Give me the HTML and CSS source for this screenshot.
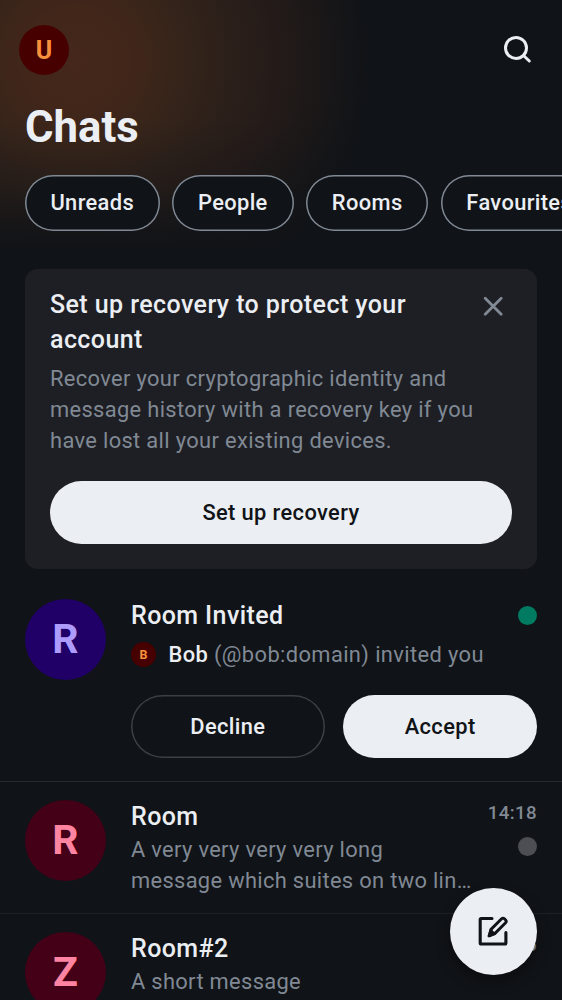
FILE: index.html
```html
<!DOCTYPE html>
<html lang="en">
<head>
<meta charset="utf-8">
<title>Chats</title>
<link rel="stylesheet" href="styles.css">
</head>
<body>
<div class="screen">
  <header class="header">
    <div class="topbar">
      <div class="avatar avatar-user">U</div>
      <svg class="search" viewBox="0 0 32 32" fill="none" stroke="currentColor" stroke-width="3" stroke-linecap="round"><circle cx="14" cy="13.9" r="10.5"/><path d="M22 22 27.3 27"/></svg>
    </div>
    <h1 class="title">Chats</h1>
    <nav class="filters">
      <button class="chip chip-unreads">Unreads</button>
      <button class="chip chip-people">People</button>
      <button class="chip chip-rooms">Rooms</button>
      <button class="chip chip-favourites">Favourites</button>
    </nav>
  </header>

  <section class="banner">
    <div class="banner-head">
      <h2 class="banner-title">Set up recovery to protect your account</h2>
      <svg class="close" viewBox="0 0 24 24" fill="none" stroke="currentColor" stroke-width="2.8" stroke-linecap="round"><path d="M4.2 4.2 20.2 20.2M20.2 4.2 4.2 20.2"/></svg>
    </div>
    <p class="banner-text">Recover your cryptographic identity and message history with a recovery key if you have lost all your existing devices.</p>
    <button class="button button-primary">Set up recovery</button>
  </section>

  <main class="rooms">
    <article class="room room-invite">
      <div class="avatar avatar-room purple">R</div>
      <div class="room-body">
        <div class="room-line">
          <h3 class="room-name">Room Invited</h3>
          <span class="dot green"></span>
        </div>
        <div class="inviter">
          <span class="avatar avatar-inviter">B</span>
          <span class="inviter-text"><b>Bob</b> (@bob:domain) invited you</span>
        </div>
        <div class="actions">
          <button class="button button-outline">Decline</button>
          <button class="button button-primary">Accept</button>
        </div>
      </div>
    </article>
    <article class="room">
      <div class="avatar avatar-room pink">R</div>
      <div class="room-body">
        <div class="room-line">
          <h3 class="room-name">Room</h3>
          <time class="time">14:18</time>
        </div>
        <div class="room-line">
          <p class="message">A very very very very long message which suites on two lin…</p>
          <span class="dot gray"></span>
        </div>
      </div>
    </article>
    <article class="room">
      <div class="avatar avatar-room pink">Z</div>
      <div class="room-body">
        <div class="room-line">
          <h3 class="room-name">Room#2</h3>
          <time class="time">14:16</time>
        </div>
        <div class="room-line"><p class="message">A short message</p></div>
      </div>
    </article>
  </main>

  <button class="fab" aria-label="New chat">
    <svg class="compose" viewBox="0 0 36 36" fill="none" stroke="currentColor" stroke-width="3.1" stroke-linecap="round" stroke-linejoin="round">
      <path d="M17 5.5H6.2Q5.2 5.5 5.2 6.5V30Q5.2 31 6.2 31H29.9Q30.9 31 30.9 30V19.5"/>
      <path stroke-width="2.9" d="M14.2 22.8 16 16.4 26.6 5.8Q28 4.4 29.4 5.8L30.6 7Q31.9 8.4 30.6 9.8L20 20.4Z"/>
      <path fill="currentColor" stroke-width="2" d="M13.6 23.2 15.6 16.7 20 21.1Z"/>
    </svg>
  </button>
</div>
</body>
</html>
```
FILE: styles.css
```css
* { box-sizing: border-box; margin: 0; padding: 0; }

body {
  background: #101317;
  color: #ebeef2;
  font-family: Roboto, "Liberation Sans", sans-serif;
  overflow: hidden;
}

button { font: inherit; color: inherit; border: 0; background: none; }
svg { display: block; flex: none; }

.screen {
  position: relative;
  width: 562px;
  height: 1000px;
  overflow: hidden;
}

.header {
  height: 269px;
  padding-top: 25px;
  background:
    linear-gradient(to bottom, rgba(16,19,23,0) 120px, rgba(16,19,23,.3) 185px, #101317 250px),
    radial-gradient(circle at 75px 60px, #45271b 0, #42261a 50px, #38251a 95px, #2e211a 140px, #261c19 190px, #1c1818 240px, #101317 292px);
}

.topbar {
  display: flex;
  justify-content: space-between;
  align-items: center;
  padding: 0 28px 0 19px;
}

.avatar {
  display: flex;
  flex: none;
  align-items: center;
  justify-content: center;
  border-radius: 50%;
  font-weight: 700;
}
.avatar-user { width: 50px; height: 50px; background: #470000; color: #f8913d; font-size: 25px; }
.avatar-room { width: 81px; height: 81px; padding-bottom: 1px; font-size: 41px; }
.avatar-inviter { width: 25px; height: 25px; background: #470000; color: #f8913d; font-size: 12.5px; }
.purple { background: #200066; color: #ad9cfe; }
.pink { background: #430017; color: #ff84a2; }

.search { width: 32px; height: 32px; }

.title {
  padding: 25px 25px 0;
  font-size: 43.7px;
  line-height: 54px;
  font-weight: 700;
}

.filters {
  display: flex;
  gap: 12.5px;
  padding: 21px 0 0 25px;
}
.chip {
  flex: none;
  height: 56px;
  padding-bottom: 1px;
  border-radius: 28px;
  background: #101317;
  box-shadow: inset 0 0 0 1.5px #808994;
  font-size: 21.86px;
  font-weight: 500;
  letter-spacing: .36px;
}
.chip-unreads { width: 134.5px; }
.chip-people { width: 121.7px; }
.chip-rooms { width: 122px; }
.chip-favourites { width: 157px; }

.banner {
  height: 300px;
  margin: 0 25px;
  padding: 19px 25px 25px;
  border-radius: 12.5px;
  background: #1e1f24;
}
.banner-head { display: flex; justify-content: space-between; }
.banner-title {
  width: 400px;
  font-size: 25px;
  line-height: 34.5px;
  font-weight: 500;
  letter-spacing: .42px;
}
.close { width: 24px; height: 24px; margin: 6px 7px 0 0; color: #808994; }
.banner-text {
  margin: 5.6px 0 25px;
  color: #808994;
  font-size: 21.86px;
  line-height: 31.2px;
  letter-spacing: .35px;
}

.button {
  width: 100%;
  height: 63px;
  border-radius: 32px;
  font-size: 21.86px;
  font-weight: 500;
  letter-spacing: .38px;
}
.button-primary { background: #ebeef2; color: #101317; }
.button-outline { box-shadow: inset 0 0 0 1.5px #3c3f44; }

.room {
  display: flex;
  gap: 25px;
  height: 132px;
  padding: 18px 25px 0;
  border-bottom: 1px solid #1e2126;
}
.room-invite { height: 213px; padding-top: 29.5px; border-color: #26282d; }
.room-body { flex: 1; min-width: 0; }
.room-line { display: flex; justify-content: space-between; }
.room-name {
  font-size: 25px;
  line-height: 34px;
  font-weight: 500;
  letter-spacing: .4px;
}
.dot { flex: none; width: 19px; height: 19px; border-radius: 50%; }
.green { margin-top: 7px; background: #007a61; }
.gray { margin-top: 3px; background: #4c4e54; }

.inviter { display: flex; align-items: center; gap: 12.5px; margin-top: 6px; }
.inviter-text {
  color: #808994;
  font-size: 21.86px;
  line-height: 31px;
  letter-spacing: .39px;
}
.inviter-text b { color: #ebeef2; font-weight: 500; }
.actions { display: flex; gap: 18.5px; margin-top: 25px; }

.time {
  color: #808994;
  font-size: 18.7px;
  line-height: 26px;
  font-weight: 500;
  letter-spacing: .39px;
}
.message {
  width: 346px;
  color: #808994;
  font-size: 21.86px;
  line-height: 31px;
  letter-spacing: .33px;
}

.fab {
  position: absolute;
  right: 25px;
  bottom: 25px;
  display: grid;
  place-items: center;
  width: 87.5px;
  height: 87.5px;
  border-radius: 50%;
  background: #ebeef2;
  color: #101317;
  box-shadow: 0 6px 14px rgba(0,0,0,.35);
}
.compose { width: 36px; height: 36px; }
```
